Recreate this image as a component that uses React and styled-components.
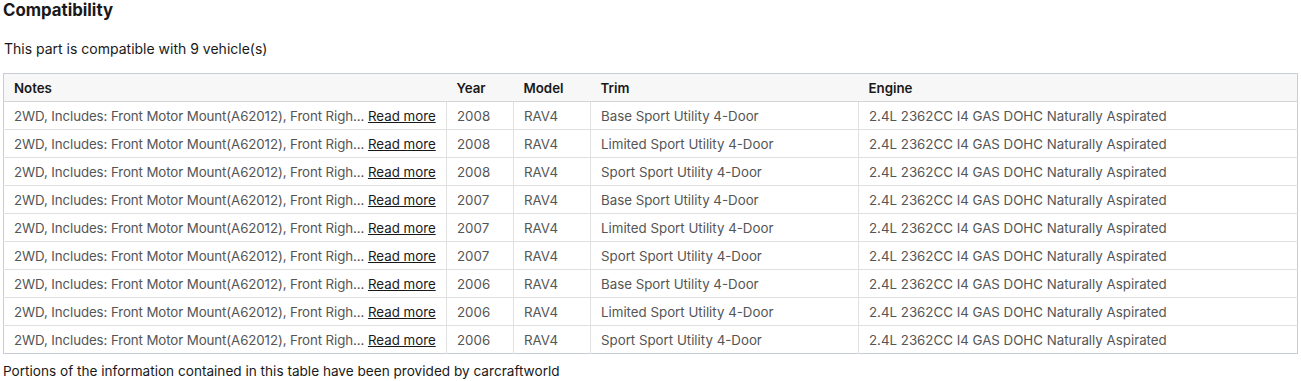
import React from "react";
import styled, { createGlobalStyle } from "styled-components";

const rows = [
  { year: "2008", trim: "Base Sport Utility 4-Door" },
  { year: "2008", trim: "Limited Sport Utility 4-Door" },
  { year: "2008", trim: "Sport Sport Utility 4-Door" },
  { year: "2007", trim: "Base Sport Utility 4-Door" },
  { year: "2007", trim: "Limited Sport Utility 4-Door" },
  { year: "2007", trim: "Sport Sport Utility 4-Door" },
  { year: "2006", trim: "Base Sport Utility 4-Door" },
  { year: "2006", trim: "Limited Sport Utility 4-Door" },
  { year: "2006", trim: "Sport Sport Utility 4-Door" },
];

function App() {
  return (
    <Wrap>
      <GlobalStyle />
      <Title>Compatibility</Title>
      <Sub>This part is compatible with 9 vehicle(s)</Sub>
      <Table>
        <colgroup>
          <col style={{ width: 443 }} />
          <col style={{ width: 67 }} />
          <col style={{ width: 77 }} />
          <col style={{ width: 268 }} />
          <col />
        </colgroup>
        <thead>
          <tr>
            <Th>Notes</Th>
            <Th>Year</Th>
            <Th>Model</Th>
            <Th>Trim</Th>
            <Th>Engine</Th>
          </tr>
        </thead>
        <tbody>
          {rows.map((r, i) => (
            <tr key={i}>
              <Td>
                <NoteText>
                  2WD, Includes: Front Motor Mount(A62012), Front Righ...
                </NoteText>{" "}
                <ReadMore href="#">Read more</ReadMore>
              </Td>
              <Td>{r.year}</Td>
              <Td>RAV4</Td>
              <Td>{r.trim}</Td>
              <Td>2.4L 2362CC I4 GAS DOHC Naturally Aspirated</Td>
            </tr>
          ))}
        </tbody>
      </Table>
      <Footer>
        Portions of the information contained in this table have been provided by
        carcraftworld
      </Footer>
    </Wrap>
  );
}

const GlobalStyle = createGlobalStyle`
  body {
    margin: 0;
    background: #fff;
    font-family: Inter, "Open Sans", "Liberation Sans", sans-serif;
    color: #191919;
  }
`;

const Wrap = styled.div`
  padding: 0 3px;
  width: 1295px;
`;

const Title = styled.h2`
  margin: 0;
  padding-top: 1px;
  font-size: 16.8px;
  line-height: 18px;
  font-weight: 700;
  color: #191919;
`;

const Sub = styled.p`
  margin: 21px 0 0 1px;
  font-size: 14px;
  line-height: 18px;
  color: #191919;
`;

const Table = styled.table`
  margin-top: 15px;
  width: 1295px;
  border-collapse: collapse;
  table-layout: fixed;
  border: 1px solid #c7ccd6;
  font-size: 13.3px;
`;

const Th = styled.th`
  height: 27px;
  padding: 0 10px;
  text-align: left;
  font-weight: 600;
  color: #191919;
  background: #f7f7f7;
  border-bottom: 1px solid #d6d6d6;
  white-space: nowrap;
`;

const Td = styled.td`
  height: 27px;
  padding: 0 6px 0 10px;
  color: #555;
  border-top: 1px solid #e0e0e0;
  border-left: 1px solid #e0e0e0;
  white-space: nowrap;
  overflow: hidden;
  &:first-child {
    border-left: none;
  }
`;

const NoteText = styled.span`
  letter-spacing: -0.1px;
`;

const ReadMore = styled.a`
  color: #191919;
  text-decoration: underline;
`;

const Footer = styled.p`
  margin: 8px 0 0 0;
  font-size: 13.6px;
  line-height: 18px;
  color: #191919;
`;

export default App;
